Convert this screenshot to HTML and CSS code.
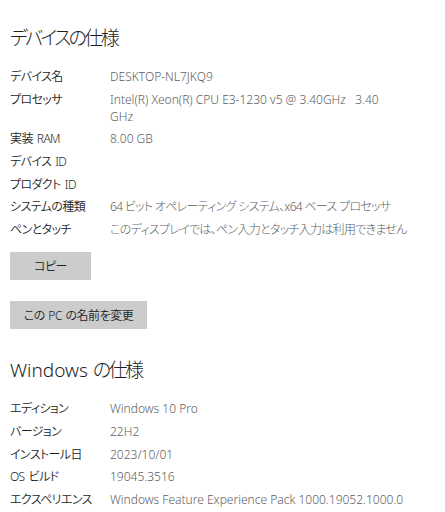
FILE: index.html
```html
<!DOCTYPE html>
<html lang="ja">
<head>
    <meta charset="UTF-8">
    <meta name="viewport" content="width=device-width, initial-scale=1.0">
    <title>バージョン情報</title>
    <link rel="stylesheet" href="styles.css">
</head>
<body>

<div class="page">
    <section class="spec">
        <h2><span class="ja">デバイスの仕様</span></h2>
        <div class="spec-list">
            <div class="spec-label">デバイス名</div>
            <div class="spec-value">DESKTOP-NL7JKQ9</div>
            <div class="spec-label">プロセッサ</div>
            <div class="spec-value">Intel(R) Xeon(R) CPU E3-1230 v5 @ 3.40GHz&nbsp;&nbsp; 3.40<br>GHz</div>
            <div class="spec-label">実装 RAM</div>
            <div class="spec-value">8.00 GB</div>
            <div class="spec-label">デバイス ID</div>
            <div class="spec-value"></div>
            <div class="spec-label">プロダクト ID</div>
            <div class="spec-value"></div>
            <div class="spec-label">システムの種類</div>
            <div class="spec-value ja">64 ビット オペレーティング システム、x64 ベース プロセッサ</div>
            <div class="spec-label">ペンとタッチ</div>
            <div class="spec-value ja">このディスプレイでは、ペン入力とタッチ入力は利用できません</div>
        </div>
        <button class="btn btn-copy">コピー</button>
        <button class="btn btn-rename">この PC の名前を変更</button>
    </section>

    <section class="spec">
        <h2>Windows <span class="ja">の仕様</span></h2>
        <div class="spec-list">
            <div class="spec-label">エディション</div>
            <div class="spec-value">Windows 10 Pro</div>
            <div class="spec-label">バージョン</div>
            <div class="spec-value">22H2</div>
            <div class="spec-label">インストール日</div>
            <div class="spec-value">2023/10/01</div>
            <div class="spec-label">OS ビルド</div>
            <div class="spec-value">19045.3516</div>
            <div class="spec-label">エクスペリエンス</div>
            <div class="spec-value">Windows Feature Experience Pack 1000.19052.1000.0</div>
        </div>
    </section>
</div>

</body>
</html>
```

FILE: styles.css
```css
body {
    font-family: 'Noto Sans', 'Noto Sans CJK JP', sans-serif;
    font-feature-settings: "palt";
    font-weight: 300;
    margin: 0;
    padding: 0;
    background-color: #ffffff;
    color: #222222;
}

.page {
    padding: 24px 10px 0 10px;
}

.spec h2 {
    font-size: 19px;
    font-weight: 300;
    line-height: 28px;
    margin: 0 0 16px 0;
    color: #1e1e1e;
}

.spec h2 .ja {
    letter-spacing: -2.6px;
}

.spec + .spec h2 {
    margin-top: 27px;
}

.spec-list {
    display: grid;
    grid-template-columns: 100px 1fr;
    row-gap: 5.7px;
    font-size: 12px;
    line-height: 17px;
}

.spec-label {
    color: #1c1c1c;
    font-weight: 350;
    letter-spacing: -0.6px;
    word-spacing: 1.5px;
}

.spec-value {
    color: #5e5e5e;
    min-height: 17px;
}

.spec-value.ja {
    letter-spacing: -0.7px;
}

.btn {
    display: block;
    font-family: inherit;
    font-feature-settings: "palt";
    font-weight: 350;
    font-size: 12px;
    letter-spacing: -0.5px;
    word-spacing: 1px;
    color: #222222;
    background: #cccccc;
    border: none;
    border-radius: 0;
    height: 28px;
    padding: 0;
    cursor: pointer;
}

.btn-copy {
    width: 81px;
    margin-top: 14px;
}

.btn-rename {
    width: 137px;
    margin-top: 21px;
}
```
